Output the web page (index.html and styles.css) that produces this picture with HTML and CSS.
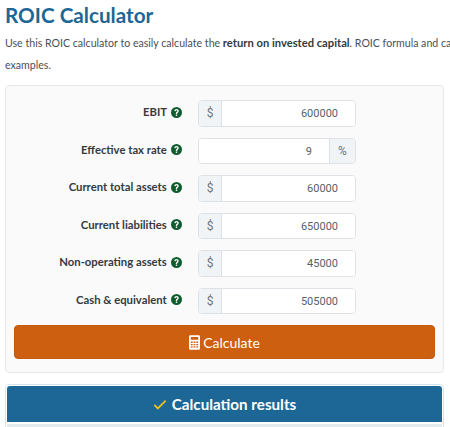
FILE: index.html
```html
<!DOCTYPE html>
<html lang="en">
<head>
  <meta charset="UTF-8" />
  <title>ROIC Calculator</title>
  <link rel="stylesheet" href="styles.css">
</head>
<body>

  <h1>ROIC Calculator</h1>
  <p class="intro">Use this ROIC calculator to easily calculate the <strong>return on invested capital</strong>. ROIC formula and calculation examples.</p>

  <form class="calc-box">
    <div class="calc-row">
      <label>EBIT <svg class="help" viewBox="0 0 16 16"><use href="#help-icon" /></svg></label>
      <div class="input-group"><span class="addon">$</span><input type="text" value="600000" /></div>
    </div>
    <div class="calc-row">
      <label>Effective tax rate <svg class="help" viewBox="0 0 16 16"><use href="#help-icon" /></svg></label>
      <div class="input-group"><input type="text" value="9" /><span class="addon addon-right">%</span></div>
    </div>
    <div class="calc-row">
      <label>Current total assets <svg class="help" viewBox="0 0 16 16"><use href="#help-icon" /></svg></label>
      <div class="input-group"><span class="addon">$</span><input type="text" value="60000" /></div>
    </div>
    <div class="calc-row">
      <label>Current liabilities <svg class="help" viewBox="0 0 16 16"><use href="#help-icon" /></svg></label>
      <div class="input-group"><span class="addon">$</span><input type="text" value="650000" /></div>
    </div>
    <div class="calc-row">
      <label>Non-operating assets <svg class="help" viewBox="0 0 16 16"><use href="#help-icon" /></svg></label>
      <div class="input-group"><span class="addon">$</span><input type="text" value="45000" /></div>
    </div>
    <div class="calc-row">
      <label>Cash &amp; equivalent <svg class="help" viewBox="0 0 16 16"><use href="#help-icon" /></svg></label>
      <div class="input-group"><span class="addon">$</span><input type="text" value="505000" /></div>
    </div>
    <button type="button" class="calc-btn">
      <svg class="calc-icon" viewBox="0 0 12 16"><path fill-rule="evenodd" d="M1.500 0h9A1.500 1.500 0 0 1 12 1.500v13a1.500 1.500 0 0 1-1.500 1.500h-9A1.500 1.500 0 0 1 0 14.500v-13A1.500 1.500 0 0 1 1.500 0zM2 2v3h8V2zM2 7v1.500h2V7zm3 0v1.500h2V7zm3 0v1.500h2V7zM2 9.500V11h2V9.500zm3 0V11h2V9.500zm3 0V11h2V9.500zM2 12v1.500h2V12zm3 0v1.500h2V12zm3 0v1.500h2V12z" /></svg>
      Calculate
    </button>
  </form>

  <div class="results">
    <div class="results-head">
      <svg class="check" viewBox="0 0 16 12"><path d="M1.500 6.500l4 4L14.500 1.500" /></svg>
      Calculation results
    </div>
    <div class="results-body"></div>
  </div>

  <svg class="icon-defs" width="0" height="0">
    <symbol id="help-icon" viewBox="0 0 16 16">
      <path fill="#0f5c2e" fill-rule="evenodd" d="M8 0a8 8 0 1 1 0 16A8 8 0 0 1 8 0zM7 11v2h2v-2zM8 3C6.200 3 5 4 4.900 5.700l1.900.3C6.900 5.200 7.300 4.800 8 4.800c.7 0 1.200.4 1.200 1 0 .5-.3.800-.9 1.200-.9.600-1.300 1.200-1.300 2.200V10h2v-.5c0-.5.200-.8.800-1.200.9-.6 1.400-1.300 1.400-2.500C11.200 4 9.900 3 8 3z" />
    </symbol>
  </svg>

</body>
</html>
```

FILE: styles.css
```css
html, body {
  height: 427px;
  overflow: hidden;
}
body {
  font-family: Lato, Arial, sans-serif;
  margin: 0;
  padding: 0 6px 0 5px;
  background: #fff;
  color: #343a40;
}
h1 {
  font-size: 20.700px;
  line-height: 30px;
  font-weight: 700;
  color: #1c6796;
  margin: 0;
}
.intro {
  width: 495px;
  font-size: 10.600px;
  line-height: 22px;
  margin: 2px 0 9px;
  color: #4a5056;
}
.intro strong {
  font-size: 11.200px;
  color: #343a40;
}
.calc-box {
  background: #fafafa;
  border: 1px solid #e6e9ec;
  border-radius: 4px;
  padding: 14px 8px 13px;
}
.calc-row {
  display: flex;
  align-items: center;
  height: 26.500px;
  margin-bottom: 11px;
}
.calc-row label {
  width: 169px;
  box-sizing: border-box;
  padding: 0 1.500px 3px 0;
  font-size: 11.300px;
  font-weight: 700;
  color: #343a40;
  text-align: right;
  white-space: nowrap;
}
.help {
  width: 11px;
  height: 11px;
  margin-left: 1px;
  vertical-align: -1.500px;
}
.input-group {
  display: flex;
  width: 158px;
  height: 26.500px;
  margin-left: 15px;
  border: 1px solid #dee2e6;
  border-radius: 4px;
  background: #fff;
  overflow: hidden;
  box-sizing: border-box;
}
.input-group input {
  flex: 1;
  min-width: 0;
  padding: 1px 17px 0 0;
  border: none;
  background: #fff;
  font-family: Roboto, Arial, sans-serif;
  font-size: 11px;
  color: #5a6167;
  text-align: right;
}
.addon {
  width: 22px;
  display: flex;
  align-items: center;
  justify-content: center;
  background: #f1f4f7;
  border-right: 1px solid #dee2e6;
  font-family: Roboto, Arial, sans-serif;
  font-size: 12px;
  color: #6c757d;
}
.addon-right {
  width: 25px;
  border-right: none;
  border-left: 1px solid #dee2e6;
}
.calc-btn {
  display: flex;
  align-items: center;
  justify-content: center;
  gap: 3px;
  width: 421px;
  height: 34px;
  margin-top: 11px;
  background: #cd5f10;
  color: #fff;
  border: 1px solid #c25a0f;
  border-radius: 4px;
  font-family: Lato, Arial, sans-serif;
  font-size: 14px;
}
.calc-icon {
  width: 11px;
  height: 15px;
  fill: #fff;
}
.results {
  margin-top: 11px;
  padding: 1px 1px 0;
  border: 1px solid #d9e4ea;
  border-radius: 4px 4px 0 0;
  background: #fff;
}
.results-head {
  display: flex;
  align-items: center;
  justify-content: center;
  gap: 5px;
  height: 36px;
  background: #1c6796;
  border-radius: 3px 3px 0 0;
  color: #fff;
  font-size: 15.200px;
  font-weight: 700;
}
.check {
  width: 14px;
  height: 11px;
  fill: none;
  stroke: #f0c020;
  stroke-width: 2;
}
.results-body {
  height: 10px;
  margin-top: 2px;
  background: #e3ebee;
}
.icon-defs {
  position: absolute;
}
```
